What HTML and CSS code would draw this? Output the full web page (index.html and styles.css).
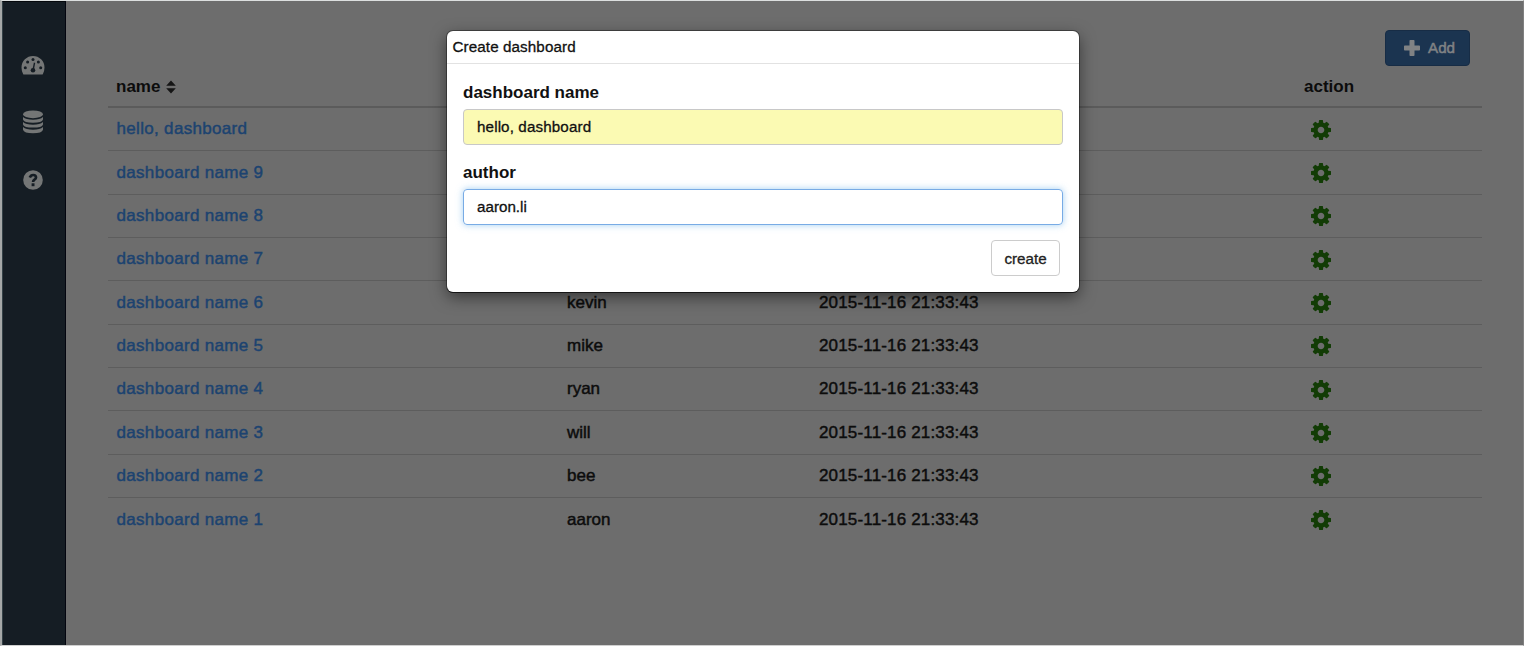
FILE: index.html
```
<!DOCTYPE html>
<html lang="en">
<head>
<meta charset="utf-8">
<title>Dashboards</title>
<link rel="stylesheet" href="styles.css">
</head>
<body>
<svg class="defs" width="0" height="0">
  <symbol id="cog" viewBox="128 128 1536 1536"><path d="M1152 896q0-106-75-181t-181-75-181 75-75 181 75 181 181 75 181-75 75-181zm512-109v222q0 12-8 23t-20 13l-185 28q-19 54-39 91 35 50 107 138 10 12 10 25t-9 23q-27 37-99 108t-94 71q-12 0-26-9l-138-108q-44 23-91 38-16 136-29 186-7 28-36 28h-222q-14 0-24.5-8.500t-11.500-21.500l-28-184q-49-16-90-37l-141 107q-10 9-25 9-14 0-25-11-126-114-165-168-7-10-7-23 0-12 8-23 15-21 51-66.500t54-70.500q-27-50-41-99l-183-27q-13-2-21-12.500t-8-23.500v-222q0-12 8-23t19-13l186-28q14-46 39-92-40-57-107-138-10-12-10-24 0-10 9-23 26-36 98.500-107.500t94.500-71.500q13 0 26 10l138 107q44-23 91-38 16-136 29-186 7-28 36-28h222q14 0 24.500 8.500t11.500 21.500l28 184q49 16 90 37l142-107q9-9 24-9 13 0 25 10 129 119 165 170 7 8 7 22 0 12-8 23-15 21-51 66.500t-54 70.500q26 50 41 98l183 28q13 2 21 12.500t8 23.500z"/></symbol>
</svg>
<div class="app">
  <nav class="sidebar">
    <svg class="nav-icon" width="24" height="20" viewBox="0 0 24 20"><path d="M2.200 19.200Q.5 16.300.5 12.500A11.500 11.500 0 0 1 23.500 12.500Q23.500 16.300 21.800 19.200Q21.500 19.500 21 19.500H3Q2.500 19.500 2.200 19.200Z"/><g class="hole"><circle cx="4.300" cy="12.700" r="1.500"/><circle cx="6.600" cy="7" r="1.500"/><circle cx="12" cy="4.600" r="1.500"/><circle cx="17.400" cy="7" r="1.500"/><circle cx="19.700" cy="12.700" r="1.500"/><circle cx="12" cy="15.300" r="2.300"/><path d="M12.900 7.600l1.300.3-1.300 7-1.500-.2z"/></g></svg>
    <svg class="nav-icon" width="22" height="24" viewBox="0 0 22 24"><ellipse cx="11" cy="4.300" rx="10" ry="3.900"/><path d="M1 7.100Q4 9.700 11 9.700T21 7.100V9.500Q20 12.700 11 12.700T1 9.500ZM1 12.100Q4 14.700 11 14.700T21 12.100V14.400Q20 17.600 11 17.600T1 14.400ZM1 17.100Q4 19.700 11 19.700T21 17.100V19.700Q20 23.200 11 23.200T1 19.700Z"/></svg>
    <svg class="nav-icon" width="20" height="20" viewBox="0 0 20 20"><circle cx="10" cy="10" r="9.800"/><path class="mark" d="M6.800 7.500Q7.800 5 10.200 5Q13 5 13 7.500Q13 8.700 11.500 9.600Q10.100 10.500 10.100 12"/><rect class="hole" x="8.600" y="13.300" width="2.900" height="2.900"/></svg>
  </nav>
  <main class="content">
    <div class="toolbar"><button class="add"><svg width="16" height="16" viewBox="0 0 16 16"><path d="M6.300 0h3.400q.8 0 .8.800v4.700h4.700q.8 0 .8.800v3.400q0 .8-.8.800h-4.700v4.700q0 .8-.8.800H6.300q-.8 0-.8-.8v-4.700H.8Q0 10.500 0 9.700V6.300q0-.8.800-.8h4.700V.8q0-.8.800-.8z"/></svg><span>Add</span></button></div>
    <div class="table">
      <div class="row head"><span class="name-head">name<svg width="10" height="14" viewBox="0 0 10 14"><path d="M5 .4L9.800 5.800H.2zM.2 8.200h9.600L5 13.600z"/></svg></span><span></span><span></span><span>action</span></div>
      <div class="row"><a>hello, dashboard</a><span></span><span></span><svg class="cog"><use href="#cog"/></svg></div>
      <div class="row"><a>dashboard name 9</a><span></span><span></span><svg class="cog"><use href="#cog"/></svg></div>
      <div class="row"><a>dashboard name 8</a><span></span><span></span><svg class="cog"><use href="#cog"/></svg></div>
      <div class="row"><a>dashboard name 7</a><span></span><span></span><svg class="cog"><use href="#cog"/></svg></div>
      <div class="row"><a>dashboard name 6</a><span>kevin</span><span class="date">2015-11-16 21:33:43</span><svg class="cog"><use href="#cog"/></svg></div>
      <div class="row"><a>dashboard name 5</a><span>mike</span><span class="date">2015-11-16 21:33:43</span><svg class="cog"><use href="#cog"/></svg></div>
      <div class="row"><a>dashboard name 4</a><span>ryan</span><span class="date">2015-11-16 21:33:43</span><svg class="cog"><use href="#cog"/></svg></div>
      <div class="row"><a>dashboard name 3</a><span>will</span><span class="date">2015-11-16 21:33:43</span><svg class="cog"><use href="#cog"/></svg></div>
      <div class="row"><a>dashboard name 2</a><span>bee</span><span class="date">2015-11-16 21:33:43</span><svg class="cog"><use href="#cog"/></svg></div>
      <div class="row"><a>dashboard name 1</a><span>aaron</span><span class="date">2015-11-16 21:33:43</span><svg class="cog"><use href="#cog"/></svg></div>
    </div>
  </main>
</div>
<section class="modal">
  <header class="modal-head">Create dashboard</header>
  <div class="modal-body">
    <label class="label">dashboard name</label>
    <div class="field filled">hello, dashboard</div>
    <label class="label">author</label>
    <div class="field focused">aaron.li</div>
    <button class="create">create</button>
  </div>
</section>
</body>
</html>
```
FILE: styles.css
```
* { box-sizing: border-box; }
body { margin: 0; font-family: "Liberation Sans", Arial, sans-serif; background: #6d6d6d; overflow: hidden; }
.defs { position: absolute; }
.app { display: flex; height: 646px; border-top: 1px solid #dcdfdf; border-bottom: 1px solid #cfcfcf; border-left: 2px solid #a5a7a7; border-right: 1px solid #808080; }
.sidebar { width: 64px; flex: none; background: #151d24; border-top: 1px solid #05080c; border-left: 1px solid #344147; border-right: 1px solid #03050f; display: flex; flex-direction: column; align-items: center; padding: 53px 3px 0 0; }
.nav-icon { fill: #747676; flex: none; }
.nav-icon + .nav-icon { margin-top: 35px; }
.nav-icon:last-child { margin-top: 36px; }
.hole { fill: #151d24; }
.mark { fill: none; stroke: #151d24; stroke-width: 2.7; }
.content { flex: 1; padding: 29px 41px 0 42px; }
.toolbar { height: 37px; display: flex; justify-content: flex-end; padding-right: 12px; }
.add { width: 85px; height: 36px; display: flex; align-items: center; gap: 8px; padding: 0 0 1px 18px; background: #1b3450; border: 1px solid #172c45; border-radius: 4px; color: #808284; font: 15.2px "Liberation Sans", Arial, sans-serif; -webkit-text-stroke: .5px #808284; }
.add svg { fill: #808284; }
.table { font-size: 17px; color: #0c0c0c; }
.row { display: grid; grid-template-columns: 451px 252px 485px 1fr; height: 43.35px; align-items: center; padding: 0 8px 0; border-bottom: 1px solid #5d5d5d; -webkit-text-stroke: .45px; }
.row:last-child { border-bottom: 0; }
.row a { color: #1c4370; padding-left: .5px; letter-spacing: .32px; }
.date { letter-spacing: .16px; }
.row.head { height: 41px; padding-top: 1px; border-bottom: 2px solid #5b5b5b; font-weight: bold; -webkit-text-stroke: 0; }
.name-head { display: flex; align-items: center; gap: 6px; }
.name-head svg { fill: #151515; }
.cog { width: 20px; height: 20px; margin: 1px 0 0 6.5px; fill: #123c05; }
.modal { position: absolute; left: 447px; top: 31px; width: 632px; height: 261px; background: #fff; border-radius: 6px; box-shadow: 0 0 0 1px rgba(0,0,0,.35), 0 1px 0 0 #222, 0 5px 16px rgba(0,0,0,.5); color: #111; }
.modal-head { height: 33px; border-bottom: 1px solid #e2e2e2; padding: 0 5.5px; font-size: 15.2px; line-height: 32px; letter-spacing: .1px; -webkit-text-stroke: .3px; }
.modal-body { display: flex; flex-direction: column; padding: 16px 16px 0; }
.label { height: 29px; font-size: 17px; font-weight: bold; line-height: 25px; }
.field { height: 36px; border: 1px solid #c8c8c8; border-radius: 4px; padding: 0 13px; font-size: 15.2px; line-height: 33px; -webkit-text-stroke: .3px; }
.filled { background: #fbfab3; margin-bottom: 15px; letter-spacing: .12px; }
.focused { border-color: #78abe5; box-shadow: 0 0 7px rgba(102,175,233,.6); }
.create { align-self: flex-end; width: 69px; height: 36px; margin: 15px 3px 0 0; padding: 0; background: #fff; border: 1px solid #ccc; border-radius: 4px; color: #222; font: 15.2px "Liberation Sans", Arial, sans-serif; -webkit-text-stroke: .3px; }
```
